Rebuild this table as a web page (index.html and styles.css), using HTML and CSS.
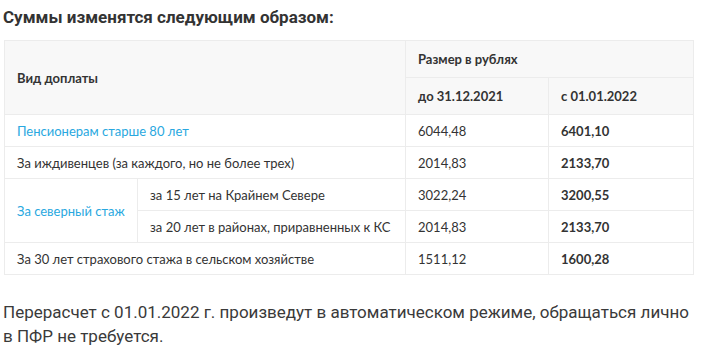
FILE: index.html
```html
<!DOCTYPE html>
<html lang="ru">
<head>
  <meta charset="UTF-8" />
  <title>Суммы доплат</title>
  <link rel="stylesheet" href="styles.css">
</head>
<body>
  <h3 class="title">Суммы изменятся следующим образом:</h3>

  <table class="pay-table">
    <colgroup>
      <col class="c1"><col class="c2"><col class="c3"><col class="c4">
    </colgroup>
    <thead>
      <tr>
        <th colspan="2" rowspan="2">Вид доплаты</th>
        <th colspan="2">Размер в рублях</th>
      </tr>
      <tr>
        <th>до 31.12.2021</th>
        <th>с 01.01.2022</th>
      </tr>
    </thead>
    <tbody>
      <tr>
        <td colspan="2"><a href="#">Пенсионерам старше 80 лет</a></td>
        <td>6044,48</td>
        <td><b>6401,10</b></td>
      </tr>
      <tr>
        <td colspan="2">За иждивенцев (за каждого, но не более трех)</td>
        <td>2014,83</td>
        <td><b>2133,70</b></td>
      </tr>
      <tr>
        <td rowspan="2"><a href="#">За северный стаж</a></td>
        <td>за 15 лет на Крайнем Севере</td>
        <td>3022,24</td>
        <td><b>3200,55</b></td>
      </tr>
      <tr>
        <td>за 20 лет в районах, приравненных к КС</td>
        <td>2014,83</td>
        <td><b>2133,70</b></td>
      </tr>
      <tr>
        <td colspan="2">За 30 лет страхового стажа в сельском хозяйстве</td>
        <td>1511,12</td>
        <td><b>1600,28</b></td>
      </tr>
    </tbody>
  </table>

  <p class="note">Перерасчет с 01.01.2022 г. произведут в автоматическом режиме, обращаться лично в ПФР не требуется.</p>
</body>
</html>
```

FILE: styles.css
```css
body {
  margin: 0;
  padding: 0 4px 0 3px;
  background: #fff;
  color: #333;
  font-family: Roboto, sans-serif;
}
.title {
  margin: 7px 0 13px;
  font-size: 17px;
  font-weight: 700;
  color: #333;
}
.pay-table {
  width: 689px;
  margin-left: 1px;
  border-collapse: collapse;
  table-layout: fixed;
  font-family: Lato, sans-serif;
  font-size: 13px;
  line-height: 18px;
  color: #333;
}
.pay-table col.c1 { width: 133px; }
.pay-table col.c2 { width: 268px; }
.pay-table col.c3 { width: 143px; }
.pay-table col.c4 { width: 145px; }
.pay-table th,
.pay-table td {
  border: 1px solid #ececec;
  padding: 0 12px;
  text-align: left;
}
.pay-table thead tr {
  height: 37px;
}
.pay-table tbody tr {
  height: 32px;
}
.pay-table th {
  background: #f8f8f8;
  font-weight: 700;
}
.pay-table a {
  color: #29a8e0;
  text-decoration: none;
}
.note {
  margin: 25px 0 0;
  font-size: 17px;
  line-height: 24px;
  color: #3a3a3a;
}
```
